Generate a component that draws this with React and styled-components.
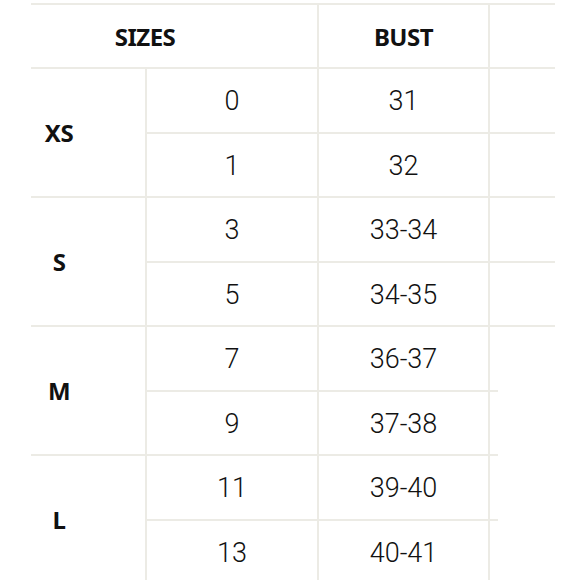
import React from 'react';
import styled, { createGlobalStyle } from 'styled-components';

const GlobalStyle = createGlobalStyle`
    html, body {
        margin: 0;
        padding: 0;
        background: #ffffff;
    }
`;

const LINE = '#ecebe5';

const Page = styled.div`
    width: 579px;
    height: 580px;
    overflow: hidden;
    background: #ffffff;
    padding-top: 3px;
    padding-left: 31px;
    box-sizing: border-box;
`;

const Chart = styled.div`
    display: grid;
    grid-template-columns: 114px 172px 171px 67px;
    grid-template-rows: 64px repeat(8, 64.5px);
    border-top: 2px solid ${LINE};
    width: 524px;
    color: #111111;
`;

const HeadCell = styled.div`
    grid-column: ${(p) => p.span};
    display: flex;
    align-items: center;
    justify-content: center;
    box-sizing: border-box;
    padding-right: ${(p) => p.shift || 0}px;
    border-bottom: 2px solid ${LINE};
    border-left: ${(p) => (p.divider ? `2px solid ${LINE}` : 'none')};
    font-family: 'Noto Sans', 'Open Sans', sans-serif;
    font-weight: 700;
    font-size: 24px;
    letter-spacing: -0.5px;
`;

const SizeCell = styled.div`
    display: flex;
    align-items: center;
    justify-content: center;
    box-sizing: border-box;
    padding-right: 58px;
    border-bottom: 2px solid ${LINE};
    font-family: 'Noto Sans', 'Open Sans', sans-serif;
    font-weight: 700;
    font-size: 24px;
    letter-spacing: -0.5px;
`;

const ValueCell = styled.div`
    display: flex;
    align-items: center;
    justify-content: center;
    box-sizing: border-box;
    border-left: 2px solid ${LINE};
    border-bottom: 2px solid ${LINE};
    font-family: Roboto, 'Noto Sans', sans-serif;
    font-weight: 300;
    font-size: 27px;
    padding-top: 2px;
`;

const EmptyCell = styled.div`
    box-sizing: border-box;
    border-left: 2px solid ${LINE};
    border-bottom: ${(p) => (p.faded ? 'none' : `2px solid ${LINE}`)};
    background: ${(p) =>
        p.faded
            ? `linear-gradient(${LINE}, ${LINE}) left bottom / 8px 2px no-repeat`
            : 'none'};
`;

const groups = [
    { size: 'XS', rows: [['0', '31'], ['1', '32']] },
    { size: 'S', rows: [['3', '33-34'], ['5', '34-35']] },
    { size: 'M', rows: [['7', '36-37'], ['9', '37-38']] },
    { size: 'L', rows: [['11', '39-40'], ['13', '40-41']] },
];

const App = () => {
    let rowIndex = 0;
    return (
        <>
            <GlobalStyle />
            <Page>
                <Chart>
                    <HeadCell span="1 / span 2" shift={58}>SIZES</HeadCell>
                    <HeadCell span="3" divider>BUST</HeadCell>
                    <HeadCell span="4" divider />
                    {groups.map((group) => (
                        <React.Fragment key={group.size}>
                            <SizeCell style={{ gridRow: `${rowIndex + 2} / span 2` }}>
                                {group.size}
                            </SizeCell>
                            {group.rows.map(([num, bust]) => {
                                rowIndex += 1;
                                const faded = rowIndex >= 5;
                                return (
                                    <React.Fragment key={num}>
                                        <ValueCell style={{ gridColumn: 2 }}>{num}</ValueCell>
                                        <ValueCell style={{ gridColumn: 3 }}>{bust}</ValueCell>
                                        <EmptyCell style={{ gridColumn: 4 }} faded={faded} />
                                    </React.Fragment>
                                );
                            })}
                        </React.Fragment>
                    ))}
                </Chart>
            </Page>
        </>
    );
};

export default App;
